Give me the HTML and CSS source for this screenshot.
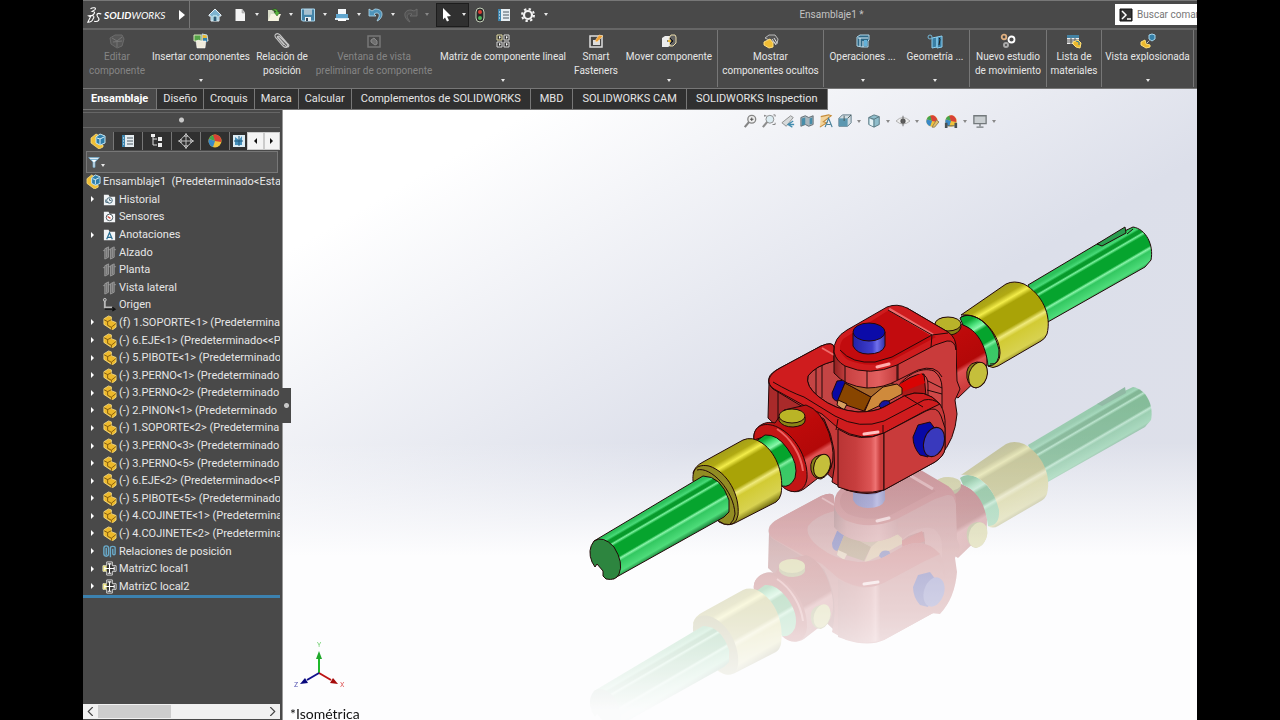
FILE: index.html
```html
<!DOCTYPE html>
<html lang="es">
<head>
    <meta charset="UTF-8">
    <meta name="viewport" content="width=device-width, initial-scale=1.0">
    <title>Ensamblaje1 - SOLIDWORKS</title>

    <link rel="stylesheet" href="styles.css">
</head>
<body>

    <!-- Icon symbols -->
    <svg class="sprite" aria-hidden="true">
        <symbol id="i-home" viewBox="0 0 16 16"><path d="M2 8 8 2l6 6v1h-2v5H4V9H2z" fill="#7fb4d0" stroke="#e8f2f8"/><path d="M6 14V9h4v5" fill="#315d78" stroke="#dff"/></symbol>
        <symbol id="i-doc" viewBox="0 0 16 16"><path d="M3.500 2h6.500l3 3.500V14h-9.500z" fill="#f4f4f4"/><path d="M10 2v4h3" fill="#bbb" stroke="#999" stroke-width=".5"/></symbol>
        <symbol id="i-open" viewBox="0 0 16 16"><path d="M2 3h5l1 2h5v9H2z" fill="#d8dcc8"/><path d="M2 14 5 7h10l-3 7z" fill="#f6f3e0"/><path d="M6 3c3-2 6-1 6 2h2l-3 4-3-4h2c0-1-2-2-4-2z" fill="#59b33c" stroke="#205010" stroke-width=".5"/></symbol>
        <symbol id="i-save" viewBox="0 0 16 16"><path d="M1.500 2h13v12h-12l-1-1z" fill="#4584a8" stroke="#a8d6ee"/><path d="M4 2.500h8v5H4z" fill="#dcebf4"/><path d="M4 4h8M4 6h8" stroke="#45718b" stroke-width=".7"/><path d="M5 10h6v4H5z" fill="#e8eef2"/><path d="M6 11h2v3H6z" fill="#345"/></symbol>
        <symbol id="i-print" viewBox="0 0 16 16"><path d="M4 2h8v5H4z" fill="#f4f8fb"/><path d="M2 7h12v4H2z" fill="#5fa6cf"/><path d="M1 11h14v2H1z" fill="#d8eaf4"/><path d="M4 12h8v2H4z" fill="#fff"/></symbol>
        <symbol id="i-undo" viewBox="0 0 16 16"><path d="M1 2v7h7L6 7c3-2 6-1 5 3l-2 4c6-2 8-12-2-12L4 4z" fill="#4e93b9" stroke="#b5dbed" stroke-width=".8"/></symbol>
        <symbol id="i-redo" viewBox="0 0 16 16"><path d="M15 2v7H8l2-2c-4-1-6 1-4 5l2 3C2 12 0 3 9 3l3 1z" fill="#525252" stroke="#6b6b6b"/></symbol>
        <symbol id="i-cursor" viewBox="0 0 16 16"><path d="m4 1 8 8-4 .500 2 4-2 1-2-4-2 2z" fill="#fff"/></symbol>
        <symbol id="i-light" viewBox="0 0 16 16"><rect x="4" y="1" width="8" height="14" rx="4" fill="#282828" stroke="#c3ceb8"/><circle cx="8" cy="5" r="2" fill="#dc3d32"/><circle cx="8" cy="11" r="2" fill="#4cb35c"/></symbol>
        <symbol id="i-props" viewBox="0 0 16 16"><path d="M2 2h12v12H2z" fill="#e6edf1"/><path d="M2 2h3v12H2z" fill="#3d85ae"/><path d="M3 5h1m-1 3h1m-1 3h1" stroke="#fff"/><path d="M7 5h6M7 8h6M7 11h6" stroke="#4a5962"/></symbol>
        <symbol id="i-gear" viewBox="0 0 16 16"><circle cx="8" cy="8" r="4" fill="none" stroke="#f2f2f2" stroke-width="2.200"/><circle cx="8" cy="8" r="6" fill="none" stroke="#f2f2f2" stroke-width="2" stroke-dasharray="2.350"/></symbol>
        <symbol id="i-part" viewBox="0 0 16 16"><path d="m2 4 5-3 3 1v4l5 2v5l-4 3-9-6z" fill="#edb92b" stroke="#ffe58d" stroke-width=".8"/><path d="m2 5 4 2 4-2M6 7v4l4 2 5-4M10 13v3" fill="none" stroke="#74500c" stroke-width=".9"/></symbol>
        <symbol id="i-asm" viewBox="0 0 16 16"><path d="m1 5 5-4 2 1v9l5 1v2l-4 2-8-6z" fill="#f0bf36" stroke="#ffe58d" stroke-width=".7"/><path d="m6 4 4-3 5 2v7l-5 2-4-2z" fill="#2e7eaa" stroke="#c7e8f6"/><path d="m7 5 3 1 4-2m-4 2v5" fill="none" stroke="#d9f0fa"/></symbol>
        <symbol id="i-editgray" viewBox="0 0 16 16"><path d="m1 5 5-3h7l2 4-2 7-5 2-6-4z" fill="#575757" stroke="#6c6c6c"/><path d="m3 5 5 3 5-4M8 8v6m-4-5 9-1" fill="none" stroke="#777"/></symbol>
        <symbol id="i-insert" viewBox="0 0 16 16"><path d="M1 2h7v6H1z" fill="#54a247" stroke="#d6e5ba"/><path d="m9 1 5 1 1 6H9z" fill="#e9b936" stroke="#bfdbea"/><path d="M10 5h4v4h-4z" fill="#3180ad"/><path d="m3 8 3-1 1 1h6l-1 7H4z" fill="#efebdb" stroke="#fff" stroke-width=".5"/></symbol>
        <symbol id="i-clip" viewBox="0 0 16 16"><path d="m3 3 9 10c2 2 4 0 2-2L6 2C3-1-1 2 2 5l7 8c3 3 6 1 4-2L6 4C4 2 3 4 4 5l6 7" fill="none" stroke="#c5c5c5" stroke-width="1.100"/></symbol>
        <symbol id="i-preview" viewBox="0 0 16 16"><path d="M2 3h12v11H2z" fill="none" stroke="#777" stroke-width="1.500"/><path d="m5 7 3-2 3 3v3l-2 1-4-3z" fill="#6f6f6f" stroke="#8b8b8b"/></symbol>
        <symbol id="i-pattern" viewBox="0 0 16 16"><g fill="#353535" stroke="#d8d8d8"><path d="M2 2h5v5H2z" stroke="#e7dfa3"/><path d="M9 2h5v5H9zM2 9h5v5H2zM9 9h5v5H9z"/></g><path d="m4 3 2 1-2 2zm7 0 2 1-2 2zM4 10l2 1-2 2zm7 0 2 1-2 2z" fill="#fff"/></symbol>
        <symbol id="i-smart" viewBox="0 0 16 16"><path d="M2 3h12v11H2z" fill="#454545" stroke="#dedede" stroke-width="1.500"/><path d="M5 7h7v5H5z" fill="#ddd"/><path d="m7 8 4-6 4 1-6 6z" fill="#ed9f35" stroke="#ffe1ad" stroke-width=".6"/></symbol>
        <symbol id="i-move" viewBox="0 0 16 16"><path d="m1 5 3-2h5v10l-2 1H1z" fill="#ededed"/><path d="m8 5 2-3h4l1 2v6l-3 3H9z" fill="#626262" stroke="#eadcac"/><path d="M6 8h6M9 5l3 3-3 3" fill="none" stroke="#111"/><path d="M7 7h3v2H7z" fill="#e8b93c"/></symbol>
        <symbol id="i-hidden" viewBox="0 0 16 16"><path d="m2 5 4-3h6l3 4-1 5-6-3z" fill="#555" stroke="#bbb"/><path d="m1 9 6-3 3 4v4l-4 1-5-3z" fill="#f0bd35" stroke="#ffdf81"/><path d="m9 6 4 6m-2-7 3 5" stroke="#ddd"/></symbol>
        <symbol id="i-feature" viewBox="0 0 16 16"><path d="m2 4 3-2h9v5l-1 1v6H7l-5-1z" fill="#2d6785" stroke="#b2d7e9"/><path d="M3 5h10M5 5v8m3-5v6" stroke="#dff2fb"/><path d="M9 7h3v6H9z" fill="#63b0d8"/></symbol>
        <symbol id="i-refgeo" viewBox="0 0 16 16"><path d="m5 5 5-1v10l-5 1zM10 4l5-1v11l-5 1z" fill="#397fa5" stroke="#8ed0f0"/><circle cx="3" cy="4" r="2" fill="none" stroke="#72b5d5"/><path d="m12 5 1 1-1 6" fill="none" stroke="#222"/></symbol>
        <symbol id="i-motion" viewBox="0 0 16 16" fill="none"><circle cx="4" cy="4" r="2.300" stroke="#e1b080" stroke-width="1.800"/><circle cx="11.500" cy="6.500" r="3" stroke="#fff" stroke-width="1.800"/><circle cx="6" cy="12" r="2" stroke="#aaa" stroke-width="2"/></symbol>
        <symbol id="i-bom" viewBox="0 0 16 16"><path d="M1 2h12v9H1z" fill="#eee"/><path d="M1 2h12v3H1z" fill="#4381a2"/><path d="M1 7h12M1 9h12M5 5v6m4-6v6" stroke="#555"/><path d="m7 9 5-2 3 3-1 5-4-1-3-3z" fill="#ecb92d" stroke="#ffe179"/><path d="m10 8 3 1v3" stroke="#2b7aa4" fill="none"/></symbol>
        <symbol id="i-explode" viewBox="0 0 16 16"><path d="m1 9 4-2 1 4 4 1v2l-4 1-5-3z" fill="#ecb92d" stroke="#ffe179"/><path d="m9 2 3-1 3 1v4l-3 2-3-2z" fill="#3680a8" stroke="#a5d6ed"/><path d="m7 10 3-3" stroke="#fff" stroke-dasharray="1"/></symbol>
        <symbol id="i-config" viewBox="0 0 16 16"><path d="M4 1v11h4M4 6h4" fill="none" stroke="#ddd"/><path d="M2 1h4v3H2zM9 4h4v4H9zM9 10h4v4H9z" fill="#eee"/></symbol>
        <symbol id="i-dim" viewBox="0 0 16 16" fill="none" stroke="#bfbfbf"><circle cx="8" cy="8" r="5"/><path d="M8 0v16M0 8h16"/><path d="m6 3 2-2 2 2M6 13l2 2 2-2M3 6 1 8l2 2M13 6l2 2-2 2"/></symbol>
        <symbol id="i-ball" viewBox="0 0 16 16"><circle cx="8" cy="8" r="6.500" fill="#f1c33b"/><path d="M8 8 2 6a6 6 0 0 1 5-4z" fill="#41a64d"/><path d="M8 8 6 2a6 6 0 0 1 8 7z" fill="#d94136"/><path d="M8 8 2 6a6 6 0 0 0 4 8z" fill="#3989c8"/></symbol>
        <symbol id="i-cam" viewBox="0 0 16 16"><path d="M2 2h12v12H2z" fill="#dcecf4"/><path d="m4 4 4 3 3-4v9H4z" fill="#458fba"/><path d="M3 8h9M8 3v10" stroke="#235c80"/></symbol>
        <symbol id="i-filter" viewBox="0 0 16 16"><path d="M2 3h12L9 8v6H7V8z" fill="#fff" stroke="#7db5d6"/><path d="M4 5h8" stroke="#5ca0c7"/></symbol>
        <symbol id="i-history" viewBox="0 0 16 16"><path d="M2 3h5l1 2h6v9H2z" fill="#f1f4f6"/><circle cx="8" cy="9" r="3" fill="none" stroke="#426579"/><path d="M8 7v2h2M4 8v3h3" fill="none" stroke="#426579"/></symbol>
        <symbol id="i-sensor" viewBox="0 0 16 16"><path d="M2 3h5l1 2h6v9H2z" fill="#f1f4f6"/><circle cx="8" cy="9" r="3.500" fill="#fff" stroke="#47545a"/><path d="m6 8 3 2" stroke="#cc4d3e" stroke-width="1.500"/></symbol>
        <symbol id="i-annot" viewBox="0 0 16 16"><path d="M2 3h5l1 2h6v9H2z" fill="#f1f4f6"/><path d="m5 13 3-7 3 7m-5-2h4" fill="none" stroke="#276d91" stroke-width="1.300"/></symbol>
        <symbol id="i-plane" viewBox="0 0 16 16"><path d="M3 4 7 2v11l-4 2zM9 4l4-2v11l-4 2z" fill="#6f6f6f" stroke="#999"/><path d="M5 3v10m6-10v10M1 6h2m4-1h2m4 0h2" stroke="#aaa" stroke-width=".7"/></symbol>
        <symbol id="i-origin" viewBox="0 0 16 16"><path d="M3 2v9h8" fill="none" stroke="#b8b8b8" stroke-width="2"/><circle cx="3" cy="3" r="1.500" fill="#666" stroke="#ccc"/><path d="M3 13h11m-3-2 3 2-3 2" fill="none" stroke="#111" stroke-width="1.300"/></symbol>
        <symbol id="i-mates" viewBox="0 0 16 16" fill="none" stroke="#69aaca" stroke-width="1.500"><rect x="2" y="2" width="5" height="11" rx="2.500"/><path d="M4.500 4v8M9 14V4c0-2 5-2 5 0v6c0 2-2.500 2-2.500 0V5"/></symbol>
        <symbol id="i-circpat" viewBox="0 0 16 16"><path d="M5 1h6v4h4v6h-4v4H5v-4H1V5h4z" fill="#333" stroke="#ddd"/><path d="M1 5h4v6H1z" fill="#e5dd78"/><path d="M8 3v10M3 8h10M6 3h4M6 13h4M3 6v4m10-4v4" stroke="#fff" stroke-width="1.200"/></symbol>
        <symbol id="h-zoomfit" viewBox="0 0 16 16"><circle cx="10" cy="6" r="4.500" fill="#eee" stroke="#858585" stroke-width="1.500"/><path d="m7 9-5 6" stroke="#858585" stroke-width="2.500"/><path d="M8 6h4m-2-2v4" stroke="#444"/></symbol>
        <symbol id="h-zoomarea" viewBox="0 0 16 16"><circle cx="9" cy="6" r="4.500" fill="#dcecf2" stroke="#858585"/><path d="m6 9-5 6" stroke="#8d8d8d" stroke-width="2.500"/><path d="M3 2h2M13 1h2v2M15 10v2h-3M3 1v2" stroke="#777" fill="none"/></symbol>
        <symbol id="h-prev" viewBox="0 0 16 16"><path d="m1 10 10-8 3 2-8 10z" fill="#d7dadb" stroke="#888"/><path d="M14 8 8 12l5 3m-5-3h7" fill="none" stroke="#438daf" stroke-width="1.500"/></symbol>
        <symbol id="h-section" viewBox="0 0 16 16"><path d="M1 4 6 2l4 2 5-2v10l-5 2-4-2-5 2z" fill="#a9b6bd" stroke="#58646a"/><path d="M2 5 6 4v8l-4 1zM11 5l3-1v7l-3 1z" fill="#478da9"/></symbol>
        <symbol id="h-annot" viewBox="0 0 16 16"><path d="m2 3 9-2 3 1-9 7 4 1-8 5" fill="#f3d39a" stroke="#c58c3a" stroke-width="1.200"/><path d="m7 15 4-10 4 10m-6-3h4" fill="none" stroke="#4c829b" stroke-width="1.400"/></symbol>
        <symbol id="h-orient" viewBox="0 0 16 16"><path d="m1 5 4-4h10v9l-4 4H1z" fill="#d1dce2" stroke="#56717f"/><path d="M1 5h10v9H1z" fill="#5c97b0"/><path d="m11 5 4-4M7 2v6" stroke="#455" fill="none"/></symbol>
        <symbol id="h-style" viewBox="0 0 16 16"><path d="m2 4 6-3 6 2v9l-6 3-6-3z" fill="#8fbdcb" stroke="#51717b"/><path d="m2 4 6 2 6-3M8 6v9" stroke="#55717a" fill="none"/><path d="m3 5 4 2v7l-4-2z" fill="#e5f1f4"/></symbol>
        <symbol id="h-eye" viewBox="0 0 16 16"><path d="M0 8q8-8 16 0-8 7-16 0z" fill="#ededed" stroke="#aaa"/><circle cx="8" cy="8" r="3" fill="#555"/><path d="M8 2v12" stroke="#666"/></symbol>
        <symbol id="h-scene" viewBox="0 0 16 16"><use href="#i-ball"/><path d="M1 10h3v3h8v-3h3v6h-3v-2H4v2H1z" fill="#485154"/></symbol>
        <symbol id="h-appear" viewBox="0 0 16 16"><use href="#i-ball"/><path d="m8 15 5-8 3 2-5 6z" fill="#e5bf67" stroke="#8a7b57"/></symbol>
        <symbol id="h-display" viewBox="0 0 16 16"><path d="M1 2h14v9H1z" fill="#c9ced1" stroke="#73797c" stroke-width="1.500"/><path d="M8 11v3M4 15h8" stroke="#73797c" stroke-width="1.500"/></symbol>
    </svg>

    <div class="app">
        <header class="titlebar">
            <div class="brand">
                <svg class="brand-mark" viewBox="0 0 18 20" fill="none" stroke="#fff" stroke-width="1.200"><path d="M4 3c3-2 7-1 5 1L6 6c4 0 3 3-1 5M1 18l3-6-2-1c5-1 7 0 5 3-1 3-3 4-6 4zM16 9c-4-2-6 0-4 3 3 3 1 6-4 5"/></svg>
                <span class="brand-name"><b>SOLID</b>WORKS</span>
                <button class="brand-more" aria-label="Menú"></button>
            </div>
            <nav class="quick">
                <button aria-label="Inicio"><svg><use href="#i-home"/></svg></button>
                <span class="split first"><button aria-label="Nuevo"><svg><use href="#i-doc"/></svg></button><i class="caret"></i></span>
                <span class="split"><button aria-label="Abrir"><svg><use href="#i-open"/></svg></button><i class="caret"></i></span>
                <span class="split"><button aria-label="Guardar"><svg><use href="#i-save"/></svg></button><i class="caret"></i></span>
                <span class="split"><button aria-label="Imprimir"><svg><use href="#i-print"/></svg></button><i class="caret"></i></span>
                <span class="split"><button aria-label="Deshacer"><svg><use href="#i-undo"/></svg></button><i class="caret"></i></span>
                <span class="split dim"><button aria-label="Rehacer"><svg><use href="#i-redo"/></svg></button><i class="caret"></i></span>
                <span class="split active"><button aria-label="Seleccionar"><svg><use href="#i-cursor"/></svg></button><i class="caret"></i></span>
                <span class="trio">
                    <button aria-label="Reconstruir"><svg><use href="#i-light"/></svg></button>
                    <button aria-label="Propiedades"><svg><use href="#i-props"/></svg></button>
                    <button aria-label="Opciones"><svg><use href="#i-gear"/></svg></button>
                </span>
                <i class="caret"></i>
            </nav>
            <h1 class="doc-title">Ensamblaje1 *</h1>
            <form class="search">
                <svg viewBox="0 0 14 14"><path d="M1 1h12v12H1z" fill="#333" stroke="#111"/><path d="m3 3 4 4-4 4m5 0h4" fill="none" stroke="#fff" stroke-width="1.500"/></svg>
                <input type="text" aria-label="Buscar comandos" placeholder="Buscar comandos">
            </form>
        </header>

        <div class="ribbon">
            <button class="tool off"><svg><use href="#i-editgray"/></svg><span>Editar<br>componente</span></button>
            <button class="tool"><svg><use href="#i-insert"/></svg><span>Insertar componentes</span><i class="caret"></i></button>
            <button class="tool"><svg><use href="#i-clip"/></svg><span>Relación de<br>posición</span></button>
            <button class="tool off"><svg><use href="#i-preview"/></svg><span>Ventana de vista<br>preliminar de componente</span></button>
            <button class="tool"><svg><use href="#i-pattern"/></svg><span>Matriz de componente lineal</span><i class="caret"></i></button>
            <button class="tool"><svg><use href="#i-smart"/></svg><span>Smart<br>Fasteners</span></button>
            <button class="tool end"><svg><use href="#i-move"/></svg><span>Mover componente</span><i class="caret"></i></button>
            <button class="tool end"><svg><use href="#i-hidden"/></svg><span>Mostrar<br>componentes ocultos</span></button>
            <button class="tool"><svg><use href="#i-feature"/></svg><span>Operaciones ...</span><i class="caret"></i></button>
            <button class="tool end"><svg><use href="#i-refgeo"/></svg><span>Geometría ...</span><i class="caret"></i></button>
            <button class="tool end"><svg><use href="#i-motion"/></svg><span>Nuevo estudio<br>de movimiento</span></button>
            <button class="tool end"><svg><use href="#i-bom"/></svg><span>Lista de<br>materiales</span></button>
            <button class="tool end"><svg><use href="#i-explode"/></svg><span>Vista explosionada</span><i class="caret"></i></button>
        </div>

        <div class="workspace">
            <nav class="tabs">
                <button class="tab current">Ensamblaje</button>
                <button class="tab">Diseño</button>
                <button class="tab">Croquis</button>
                <button class="tab">Marca</button>
                <button class="tab">Calcular</button>
                <button class="tab wide">Complementos de SOLIDWORKS</button>
                <button class="tab wide">MBD</button>
                <button class="tab wide">SOLIDWORKS CAM</button>
                <button class="tab wide">SOLIDWORKS Inspection</button>
            </nav>

            <div class="content">
                <aside class="panel">
                    <div class="grip"></div>
                    <div class="managers">
                        <button class="manager on" aria-label="Gestor de diseño"><svg><use href="#i-asm"/></svg></button>
                        <button class="manager" aria-label="Propiedades"><svg><use href="#i-props"/></svg></button>
                        <button class="manager" aria-label="Configuraciones"><svg><use href="#i-config"/></svg></button>
                        <button class="manager" aria-label="Cotas"><svg><use href="#i-dim"/></svg></button>
                        <button class="manager" aria-label="Apariencias"><svg><use href="#i-ball"/></svg></button>
                        <button class="manager last" aria-label="CAM"><svg><use href="#i-cam"/></svg></button>
                        <button class="step left" aria-label="Anterior"></button>
                        <button class="step right" aria-label="Siguiente"></button>
                    </div>
                    <div class="filter"><svg><use href="#i-filter"/></svg><i class="caret"></i></div>

                    <ul class="tree">
                        <li class="root"><svg><use href="#i-asm"/></svg>Ensamblaje1&nbsp; (Predeterminado&lt;Esta</li>
                        <li class="more"><svg><use href="#i-history"/></svg>Historial</li>
                        <li><svg><use href="#i-sensor"/></svg>Sensores</li>
                        <li class="more"><svg><use href="#i-annot"/></svg>Anotaciones</li>
                        <li><svg><use href="#i-plane"/></svg>Alzado</li>
                        <li><svg><use href="#i-plane"/></svg>Planta</li>
                        <li><svg><use href="#i-plane"/></svg>Vista lateral</li>
                        <li><svg><use href="#i-origin"/></svg>Origen</li>
                        <li class="more"><svg><use href="#i-part"/></svg>(f) 1.SOPORTE&lt;1&gt; (Predetermina</li>
                        <li class="more"><svg><use href="#i-part"/></svg>(-) 6.EJE&lt;1&gt; (Predeterminado&lt;&lt;P</li>
                        <li class="more"><svg><use href="#i-part"/></svg>(-) 5.PIBOTE&lt;1&gt; (Predeterminado</li>
                        <li class="more"><svg><use href="#i-part"/></svg>(-) 3.PERNO&lt;1&gt; (Predeterminado</li>
                        <li class="more"><svg><use href="#i-part"/></svg>(-) 3.PERNO&lt;2&gt; (Predeterminado</li>
                        <li class="more"><svg><use href="#i-part"/></svg>(-) 2.PINON&lt;1&gt; (Predeterminado</li>
                        <li class="more"><svg><use href="#i-part"/></svg>(-) 1.SOPORTE&lt;2&gt; (Predetermina</li>
                        <li class="more"><svg><use href="#i-part"/></svg>(-) 3.PERNO&lt;3&gt; (Predeterminado</li>
                        <li class="more"><svg><use href="#i-part"/></svg>(-) 3.PERNO&lt;5&gt; (Predeterminado</li>
                        <li class="more"><svg><use href="#i-part"/></svg>(-) 6.EJE&lt;2&gt; (Predeterminado&lt;&lt;P</li>
                        <li class="more"><svg><use href="#i-part"/></svg>(-) 5.PIBOTE&lt;5&gt; (Predeterminado</li>
                        <li class="more"><svg><use href="#i-part"/></svg>(-) 4.COJINETE&lt;1&gt; (Predetermina</li>
                        <li class="more"><svg><use href="#i-part"/></svg>(-) 4.COJINETE&lt;2&gt; (Predetermina</li>
                        <li class="more"><svg><use href="#i-mates"/></svg>Relaciones de posición</li>
                        <li class="more"><svg><use href="#i-circpat"/></svg>MatrizC local1</li>
                        <li class="more"><svg><use href="#i-circpat"/></svg>MatrizC local2</li>
                    </ul>

                    <div class="hscroll">
                        <button aria-label="Izquierda"><svg viewBox="0 0 8 8"><path d="M6 0 2 4l4 4"/></svg></button>
                        <div class="thumb"></div>
                        <button aria-label="Derecha"><svg viewBox="0 0 8 8"><path d="m2 0 4 4-4 4"/></svg></button>
                    </div>
                    <button class="collapse" aria-label="Ocultar panel"></button>
                </aside>

                <main class="viewport">
                    <svg class="scene" viewBox="283 110 914 610" preserveAspectRatio="xMinYMin meet">
                        <defs>
                            <linearGradient id="greenA" gradientUnits="userSpaceOnUse" x1="599" y1="540" x2="620" y2="576">
                                <stop offset="0" stop-color="#2cc15a"/><stop offset=".08" stop-color="#48da78"/><stop offset=".13" stop-color="#079a2b"/><stop offset=".2" stop-color="#079a2b"/><stop offset=".24" stop-color="#7bf29f"/><stop offset=".3" stop-color="#06a42e"/><stop offset=".58" stop-color="#06a42e"/><stop offset=".63" stop-color="#8af5aa"/><stop offset=".69" stop-color="#33c861"/><stop offset=".9" stop-color="#4edc7a"/><stop offset="1" stop-color="#218f42"/>
                            </linearGradient>
                            <linearGradient id="greenB" href="#greenA" gradientTransform="translate(425 -249)"/>
                            <linearGradient id="greenN" gradientUnits="userSpaceOnUse" x1="763" y1="440" x2="790" y2="486">
                                <stop offset="0" stop-color="#0aa835"/><stop offset=".12" stop-color="#4ee27d"/><stop offset=".2" stop-color="#8bf7ac"/><stop offset=".27" stop-color="#05a42d"/><stop offset=".52" stop-color="#05a42d"/><stop offset=".58" stop-color="#83efa2"/><stop offset=".64" stop-color="#38ca65"/><stop offset="1" stop-color="#3fc968"/>
                            </linearGradient>
                            <linearGradient id="greenM" href="#greenN" gradientTransform="translate(203 -118)"/>
                            <linearGradient id="yellowA" gradientUnits="userSpaceOnUse" x1="722" y1="453" x2="756" y2="512">
                                <stop offset="0" stop-color="#a6a018"/><stop offset=".1" stop-color="#b1aa13"/><stop offset=".18" stop-color="#f3ed4a"/><stop offset=".25" stop-color="#a9a307"/><stop offset=".55" stop-color="#a9a307"/><stop offset=".61" stop-color="#f0ea7c"/><stop offset=".67" stop-color="#d2cb34"/><stop offset=".9" stop-color="#d8d250"/><stop offset="1" stop-color="#7f7a16"/>
                            </linearGradient>
                            <linearGradient id="yellowB" href="#yellowA" gradientTransform="translate(267 -157)"/>
                            <linearGradient id="hub" gradientUnits="userSpaceOnUse" x1="788" y1="412" x2="826" y2="476">
                                <stop offset="0" stop-color="#b61717"/><stop offset=".25" stop-color="#bd0a0a"/><stop offset=".62" stop-color="#b30808"/><stop offset=".68" stop-color="#e05252"/><stop offset="1" stop-color="#c33333"/>
                            </linearGradient>
                            <linearGradient id="hubB" href="#hub" gradientTransform="translate(160 -92)"/>
                            <linearGradient id="corner" gradientUnits="userSpaceOnUse" x1="837" y1="0" x2="884" y2="0">
                                <stop offset="0" stop-color="#b93434"/><stop offset=".4" stop-color="#c73e3e"/><stop offset=".72" stop-color="#dc5555"/><stop offset=".82" stop-color="#ee7373"/><stop offset=".92" stop-color="#c83c3c"/><stop offset="1" stop-color="#c93b3b"/>
                            </linearGradient>
                            <linearGradient id="wall" gradientUnits="userSpaceOnUse" x1="834" y1="0" x2="898" y2="0">
                                <stop offset="0" stop-color="#8e1f1f"/><stop offset=".2" stop-color="#c94242"/><stop offset=".7" stop-color="#e25f5f"/><stop offset="1" stop-color="#c23a3a"/>
                            </linearGradient>
                            <linearGradient id="blue" x1="0" x2="1">
                                <stop offset="0" stop-color="#2222a8"/><stop offset=".6" stop-color="#3f3fcc"/><stop offset=".75" stop-color="#7070ec"/><stop offset="1" stop-color="#3030a8"/>
                            </linearGradient>
                            <linearGradient id="fade" gradientUnits="userSpaceOnUse" x1="0" y1="390" x2="0" y2="710">
                                <stop offset="0" stop-color="#808080"/><stop offset=".35" stop-color="#606060"/><stop offset=".7" stop-color="#383838"/><stop offset="1" stop-color="#040404"/>
                            </linearGradient>
                            <mask id="floor" maskUnits="userSpaceOnUse" x="283" y="380" width="914" height="340"><path d="M283 380h914v340H283z" fill="url(#fade)"/></mask>

                            <!-- Right shaft, bearing and hub -->
                            <g id="right-arm" class="solid">
                                <path d="M1028 285 1097 244 1133 227C1146 229 1154 245 1151 260L1145 267 1046 323Z" fill="url(#greenB)"/>
                                <path d="m1097 244 28-17 1 6-24 13zM1127 234l6-5" fill="#2b9c50"/>
                                <path d="M935 333 961 324C982 332 990 350 986 371L958 398 945 390Z" fill="url(#hubB)"/>
                                <path d="M960 318C971 309 989 321 1000 346 1003 359 999 368 988 366 986 345 977 330 963 325Z" fill="url(#greenM)"/>
                                <path d="M961 315 1006 284Q1014 280 1024 284C1042 294 1052 315 1047 334Q1045 339 1041 341L998 366Q993 369 988 366 1000 366 999 350C994 328 980 313 961 315Z" fill="url(#yellowB)"/>
                                <path d="M961 317C977 309 1000 333 1000 353Q1000 365 990 364" fill="none"/>
                                <path d="M936 322q5-6 15-4 10 2 10 9-2 7-11 8z" fill="#858015"/><ellipse cx="948" cy="324" rx="13" ry="7" fill="#b9b32a"/>
                                <path d="M967 378q-2-14 10-16 11 0 10 12-2 12-11 14-7-1-9-10z" fill="#88831b"/><ellipse cx="978" cy="375" rx="9" ry="13" transform="rotate(18 978 375)" fill="#c5bf3b"/>
                            </g>

                            <!-- Rear yoke arm -->
                            <g id="rear-yoke" class="solid">
                                <path d="M880 330 907 308 948 332Q956 338 956 350L957 381 960 389 955 400 957 414Q955 440 940 456L910 453 880 410Z" fill="#c93b3b"/>
                                <path d="M896 388C906 376 920 366 934 371Q942 377 942 388V408L900 412Z" fill="#d04848"/>
                                <path d="M896 388Q910 374 924 374L926 396 900 402Z" fill="#b01818"/>
                                <path d="m900 384 22-11 3 10-26 10z" fill="#d80404" stroke="none"/>
                                <path d="M922 374q6 2 6 11v14m0-18 14 7m-15 2 15 4" fill="none"/>
                            </g>

                            <!-- Front yoke -->
                            <g id="front-yoke" class="solid">
                                <path d="M769 382 768 418 834 480 838 426Z" fill="#a92a2a"/>
                                <path d="M834 352 800 368V392L858 418 904 402 898 380 836 376Z" fill="#c44444" stroke="none"/>
                                <path d="M816 367v27m6-30v34" fill="none"/>
                                <path d="M832 393 837 381 846 380 838 401Q832 401 832 393Z" fill="#0808a4"/>
                                <path d="m845 383 26 14-7 14-27-9z" fill="#884500"/>
                                <path d="m845 383 36-2 16 4-14 3-12 9z" fill="#a8682a"/>
                                <path d="m871 397 12-10 14-3 5 4v6l-19 10-19 9z" fill="#cf8a3c"/>
                                <path d="m838 400 9 4-3 6-7-5z" fill="#d6a060"/>
                                <path d="M879 406q2-7 10-5l2 4-8 5z" fill="#16169f"/>
                                <path d="M769 378Q770 373 780 368L821 346Q833 341 834 347V361Q815 366 808 376 805 386 819 397 835 410 858 412 875 412 884 407L904 396Q925 387 940 404 946 414 945 427V449Q944 456 935 462L884 490Q869 497 846 490L832 482 Q840 450 824 419L803 407 773 389Q767 384 769 378Z" fill="#c73939"/>
                                <path d="M769 379Q771 373 780 368L821 346Q833 341 834 347V361Q815 366 808 376 805 386 819 397 835 410 858 412 875 412 884 407L904 396Q925 387 940 404L923 412 884 433Q862 443 838 428L822 414 803 405 774 389Q768 385 769 379Z" fill="#cf1c1e"/>
                                <path d="M838 429Q860 444 884 433V490Q861 496 838 487Z" fill="url(#corner)"/>
                                <path d="M884 433 926 411Q937 405 941 416L945 428V449Q944 456 935 462L884 490Z" fill="#c93b3b"/>
                                <path d="m822 348 12 7" stroke="#ee6b6b" stroke-width="2"/>
                                <path d="m905 396 18 11M838 419l-2 11M883 425v9M778 391v30M773 382Q790 392 804 397L835 416Q860 430 884 421L924 400Q933 398 940 404" fill="none"/>
                                <path d="m864 434 14-2" stroke="#ffc1c1" stroke-width="3" stroke-linecap="round"/>
                                <path d="M913 437 918 425 930 422 936 430 928 457 920 455Q913 447 913 437Z" fill="#0909a6"/><ellipse cx="934" cy="442" rx="10" ry="15" transform="rotate(18 934 442)" fill="#3939bd"/>
                            </g>

                            <!-- Rear yoke upper tongue -->
                            <g id="tongue" class="solid">
                                <path d="M834 350V373Q845 386 867 388 884 388 898 380L928 366Q941 364 945 378L956 384V350L948 332Z" fill="#c93b3b" stroke="none"/>
                                <path d="M834 350V373Q845 386 867 388 884 388 898 380V360Z" fill="url(#wall)"/>
                                <path d="M898 380 918 370Q936 364 942 377" fill="none"/>
                                <path d="M834 352Q833 338 847 330L887 307Q897 303 907 308L948 332Q957 338 956 350 955 340 947 341L935 345 897 365Q870 377 845 366 836 361 834 352Z" fill="#cf1c1e"/>
                                <path d="M843 339 889 310 936 337 891 361Q870 369 848 360 835 351 843 339Z" fill="#c20b0e" stroke="none"/>
                                <path d="M889 309 933 335" stroke="#ee6b6b" stroke-width="3"/>
                                <path d="M888 310 932 335l-1 12M845 366v16M867 371v17M897 365v15M840 350Q852 364 875 362L892 357 932 335 948 333" fill="none"/>
                                <path d="m877 367 12-3" stroke="#ffaaaa" stroke-width="3" stroke-linecap="round"/>
                                <path d="M853 333v13q4 8 15 8 14 0 17-8v-14z" fill="url(#blue)"/><ellipse cx="869" cy="332" rx="16" ry="9" fill="#0b0ba8"/>
                            </g>

                            <!-- Left shaft, bearing and hub -->
                            <g id="left-arm" class="solid">
                                <path d="M754 440C752 428 764 420 775 423L784 410 806 405Q821 410 829 433 836 455 831 468L804 489C795 495 786 490 782 485Z" fill="url(#hub)"/>
                                <path d="M754 440C752 425 766 420 781 429 798 439 808 461 807 478 805 495 789 494 782 486L794 476C797 460 779 431 763 437Z" fill="#c31515"/>
                                <path d="M777 429c14 9 24 26 26 42" stroke="#ef6262" stroke-width="2" fill="none"/>
                                <path d="M755 442 765 435Q777 434 787 448 799 464 795 478 790 488 782 486Z" fill="url(#greenN)"/>
                                <path d="M693 473Q695 466 703 462L743 440Q752 436 762 443C778 454 784 477 781 494Q780 499 776 502L735 523Q728 527 719 522Z" fill="url(#yellowA)"/>
                                <path d="M693 481C692 468 698 464 709 466 728 472 740 496 738 515Q736 527 724 524L714 518Z" fill="#928c23"/>
                                <path d="M697 470C711 466 734 491 735 514Q734 521 730 524" fill="none"/>
                                <path d="M594 541 703 476Q721 476 729 500L729 512 724 517 613 579Z" fill="url(#greenA)"/>
                                <path d="M594 541Q603 535 614 547 624 563 619 574 616 581 606 579L603 576V571L597 564 595 567 592 562Q587 550 594 541Z" fill="#2d853f"/>
                                <path d="M779 417v4q4 6 14 6 11-1 12-6v-4z" fill="#8a8516"/><ellipse cx="792" cy="416" rx="13" ry="7" fill="#bab426"/>
                                <path d="M811 470q-2-12 9-15 10-1 11 9-1 11-10 15-8 0-10-9z" fill="#88831b"/><ellipse cx="822" cy="466" rx="8" ry="12" transform="rotate(18 822 466)" fill="#c5bf3b"/>
                            </g>
                        </defs>

                        <g class="reflection" mask="url(#floor)">
                            <use href="#right-arm" y="160"/>
                            <use href="#rear-yoke" y="158"/>
                            <use href="#front-yoke" y="150"/>
                            <use href="#tongue" y="154"/>
                            <use href="#left-arm" y="150"/>
                        </g>
                        <g>
                            <use href="#right-arm"/>
                            <use href="#rear-yoke"/>
                            <use href="#front-yoke"/>
                            <use href="#tongue"/>
                            <use href="#left-arm"/>
                        </g>

                        <g class="triad">
                            <path d="M319 673V657" stroke="#20b92b" stroke-width="2"/><path d="m319 651-3 8h6z" fill="#20a82b"/>
                            <path d="m319 673 12 7" stroke="#bd1313" stroke-width="2"/><path d="m338 684-8-1 3-5z" fill="#a50b0b"/>
                            <path d="m319 673-12 7" stroke="#12128d" stroke-width="2"/><path d="m300 684 8-1-3-5z" fill="#08087c"/>
                            <text x="317" y="647" fill="#71d071">Y</text><text x="340" y="687" fill="#de5757">X</text><text x="294" y="687" fill="#5353b0">Z</text>
                        </g>
                    </svg>

                    <div class="hud">
                        <svg><use href="#h-zoomfit"/></svg>
                        <svg><use href="#h-zoomarea"/></svg>
                        <svg><use href="#h-prev"/></svg>
                        <svg><use href="#h-section"/></svg>
                        <svg><use href="#h-annot"/></svg>
                        <svg><use href="#h-orient"/></svg><i class="caret"></i>
                        <svg><use href="#h-style"/></svg><i class="caret"></i>
                        <svg><use href="#h-eye"/></svg><i class="caret"></i>
                        <svg><use href="#h-appear"/></svg>
                        <svg><use href="#h-scene"/></svg><i class="caret"></i>
                        <svg><use href="#h-display"/></svg><i class="caret"></i>
                    </div>
                    <p class="view-name">*Isométrica</p>
                </main>
            </div>
        </div>
    </div>

</body>
</html>
```

FILE: styles.css
```css
/* General */
* {
    box-sizing: border-box;
}

body {
    margin: 0;
    background: #000;
    color: #e6e6e6;
    font-family: Roboto, "Open Sans", sans-serif;
    font-size: 11px;
}

button {
    padding: 0;
    border: none;
    background: none;
    color: inherit;
    font: inherit;
}

svg {
    display: block;
    flex: none;
    width: 16px;
    height: 16px;
}

.sprite {
    position: absolute;
    width: 0;
    height: 0;
}

.caret {
    width: 0;
    height: 0;
    border: 2px solid transparent;
    border-top: 3px solid #e8e8e8;
    border-bottom: none;
}

.app {
    display: flex;
    flex-direction: column;
    height: 100vh;
    margin: 0 83px;
    overflow: hidden;
    background: #494949;
}

/* Title bar */
.titlebar {
    display: flex;
    align-items: center;
    height: 30px;
    border-top: 1px solid #777;
    border-bottom: 2px solid #666;
}

.brand {
    display: flex;
    align-items: center;
    width: 107px;
    height: 100%;
    padding-left: 3px;
    border-right: 1px solid #777;
}

.brand-mark {
    width: 18px;
    height: 18px;
}

.brand-name {
    width: 75px;
    font-family: "Lato", sans-serif;
    font-size: 10px;
    font-style: italic;
    color: #fff;
}

.brand-more {
    border: 5px solid transparent;
    border-left: 6px solid #fff;
    border-right: none;
}

.quick {
    display: flex;
    align-items: center;
    height: 100%;
    padding-left: 17px;
}

.split {
    display: flex;
    align-items: center;
    height: 24px;
}

.split.first {
    margin-left: 9px;
}

.split .caret {
    margin: 0 7px;
}

.split.dim .caret {
    border-top-color: #888;
}

.split.active {
    padding-left: 2px;
    border: 1px solid #1d1d1d;
    background: #303030;
}

.split.active .caret {
    margin: 0 2px 0 7px;
}

.trio {
    display: flex;
    gap: 8px;
    margin: 0 8px 0 3px;
}

.doc-title {
    flex: 1;
    margin: 0;
    font-size: 10px;
    font-weight: normal;
    text-align: center;
    color: #c4c4c4;
}

.search {
    display: flex;
    align-items: center;
    gap: 4px;
    width: 82px;
    height: 21px;
    padding-left: 4px;
    overflow: hidden;
    background: #fff;
}

.search svg {
    width: 14px;
    height: 14px;
}

.search input {
    width: 120px;
    flex: none;
    padding: 0;
    border: none;
    font: inherit;
    font-size: 10px;
}

.search input::placeholder {
    color: #777;
}

/* Ribbon */
.ribbon {
    display: grid;
    grid-template-columns: 68px 100px 62px 122px 136px 50px 97px 106px 77px 69px 77px 55px 92px;
    height: 58px;
    padding-bottom: 1px;
}

.tool {
    display: flex;
    flex-direction: column;
    align-items: center;
    padding: 3px 0 5px;
    font-size: 10px;
    line-height: 14px;
    white-space: nowrap;
}

.tool svg {
    margin-bottom: 1px;
}

.tool .caret {
    margin-top: auto;
}

.tool.off {
    color: #858585;
}

.tool.end {
    border-right: 1px solid #777;
}

/* Command tabs and drawing area */
.workspace {
    flex: 1;
    display: flex;
    flex-direction: column;
    min-height: 0;
    border-top: 1px solid #777;
    background:
        linear-gradient(to bottom, rgba(255, 255, 255, 0) 56%, #fdfdfe 74%),
        linear-gradient(150deg, #fff 0%, #fff 22%, #dcdfea 56%, #dfe1ea 100%);
}

.tabs {
    display: flex;
    align-self: flex-start;
    height: 21px;
    border-bottom: 1px solid #777;
    background: #303030;
}

.tab {
    padding: 0 6px;
    border-right: 1px solid #777;
    line-height: 20px;
    white-space: nowrap;
}

.tab.wide {
    padding: 0 9px;
}

.tab.current {
    padding: 0 8px;
    background: #494949;
    font-weight: bold;
    color: #fff;
}

.content {
    flex: 1;
    display: flex;
    min-height: 0;
}

/* Feature tree panel */
.panel {
    position: relative;
    display: flex;
    flex-direction: column;
    flex: none;
    width: 200px;
    padding: 2px 2px 1px 0;
    border-right: 1px solid #999;
    background: #494949;
}

.grip {
    height: 16px;
    border: 1px solid #666;
    border-width: 1px 0;
    background: radial-gradient(circle, #c8c8c8 2px, transparent 3px);
}

.managers {
    display: flex;
    height: 18px;
    margin-top: 4px;
    background: #303030;
}

.manager {
    display: flex;
    align-items: center;
    justify-content: center;
    flex: none;
    width: 29px;
    border-right: 1px solid #777;
}

.manager.on {
    width: 31px;
    background: #494949;
}

.manager.last {
    width: 17px;
    overflow: hidden;
    border: none;
}

.step {
    display: flex;
    align-items: center;
    justify-content: center;
    flex: 1;
    border: 1px solid #ccc;
    background: #f4f4f4;
}

.step::before {
    content: "";
    border: 3px solid transparent;
}

.step.left::before {
    border-left: none;
    border-right-color: #111;
}

.step.right::before {
    border-right: none;
    border-left-color: #111;
}

.filter {
    display: flex;
    align-items: center;
    height: 22px;
    margin: 1px 2px 0 3px;
    border: 1px solid #777;
    background: #555;
}

.filter .caret {
    margin-top: 6px;
}

.filter svg {
    width: 14px;
    height: 14px;
}

.tree {
    display: grid;
    grid-auto-rows: 1fr;
    flex: none;
    height: 425px;
    margin: 0;
    padding: 0;
    overflow: hidden;
    border-bottom: 3px solid #3c82b0;
    line-height: 17px;
    list-style: none;
}

.tree li {
    display: flex;
    align-items: center;
    gap: 2px;
    padding-left: 19px;
    overflow: hidden;
    white-space: nowrap;
}

.tree svg {
    width: 15px;
    height: 15px;
}

.tree li.root {
    padding-left: 3px;
}

.tree li.more {
    padding-left: 8px;
}

.tree li.more::before {
    content: "";
    margin-right: 6px;
    border: 3px solid transparent;
    border-left-color: #fff;
    border-right: none;
}

.hscroll {
    display: flex;
    align-items: center;
    height: 15px;
    margin-top: auto;
    background: #f1f1f1;
}

.hscroll button {
    display: flex;
    justify-content: center;
    width: 15px;
}

.hscroll svg {
    width: 9px;
    height: 9px;
    fill: none;
    stroke: #444;
}

.hscroll .thumb {
    width: 73px;
    height: 13px;
    margin-right: auto;
    background: #cdcdcd;
}

.collapse {
    position: absolute;
    top: 278px;
    right: -9px;
    z-index: 1;
    width: 9px;
    height: 35px;
    background: radial-gradient(circle, #c8c8c8 2px, #494949 3px);
}

/* Viewport */
.viewport {
    position: relative;
    flex: 1;
    min-width: 0;
    overflow: hidden;
}

.scene {
    width: 100%;
    height: auto;
}

.solid {
    stroke: var(--edge, #230808);
    stroke-width: 1;
    stroke-linejoin: round;
}

.reflection {
    --edge: none;
    filter: saturate(0.7);
}

.triad text {
    font-size: 7px;
}

.hud {
    position: absolute;
    top: 4px;
    left: 460px;
    display: flex;
    align-items: center;
    gap: 5px;
}

.hud svg {
    width: 14px;
    height: 14px;
}

.hud .caret {
    margin-right: 1px;
    border-top-color: #888;
}

.view-name {
    position: absolute;
    bottom: -2px;
    left: 7px;
    margin: 0;
    font-family: "Lato", sans-serif;
    font-size: 14px;
    line-height: 16px;
    color: #111;
}
```
